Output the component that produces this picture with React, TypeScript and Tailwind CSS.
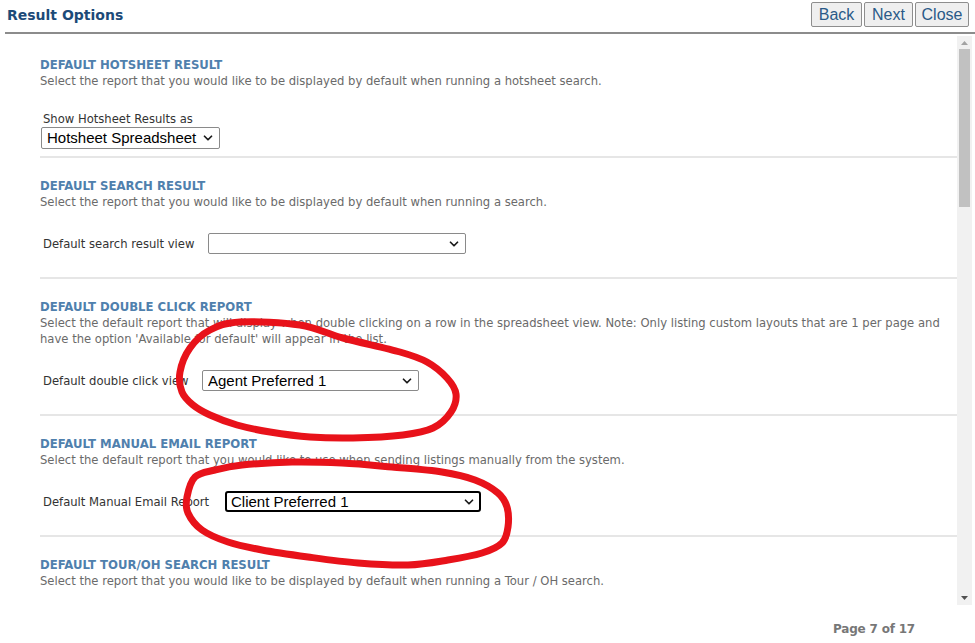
import type { ReactNode } from "react";
import { ChevronDown } from "lucide-react";

type Pt = [number, number];

// closed catmull-rom loop -> cubic bezier path
function loopPath(pts: Pt[]) {
  const n = pts.length;
  let d = `M${pts[0][0]},${pts[0][1]}`;
  for (let i = 0; i < n; i++) {
    const p0 = pts[(i - 1 + n) % n];
    const p1 = pts[i];
    const p2 = pts[(i + 1) % n];
    const p3 = pts[(i + 2) % n];
    const c1x = p1[0] + (p2[0] - p0[0]) / 6;
    const c1y = p1[1] + (p2[1] - p0[1]) / 6;
    const c2x = p2[0] - (p3[0] - p1[0]) / 6;
    const c2y = p2[1] - (p3[1] - p1[1]) / 6;
    d += ` C${c1x.toFixed(1)},${c1y.toFixed(1)} ${c2x.toFixed(1)},${c2y.toFixed(1)} ${p2[0]},${p2[1]}`;
  }
  return d;
}

const LOOP_ONE: Pt[] = [
  [240, 322], [300, 325], [343, 338], [400, 352], [427, 362], [447, 378],
  [456, 394], [451, 412], [433, 428], [403, 435], [353, 438], [310, 437],
  [270, 432], [237, 425], [210, 415], [193, 405], [182, 392], [180, 372],
  [190, 348], [210, 330],
];

const LOOP_TWO: Pt[] = [
  [242, 465], [292, 462], [342, 463], [392, 467], [442, 472], [475, 480],
  [498, 493], [507, 507], [508, 527], [502, 543], [482, 553], [448, 560],
  [408, 565], [358, 563], [308, 557], [262, 550], [228, 542], [202, 530],
  [188, 513], [187, 497], [195, 477], [215, 470],
];

function Dropdown({
  value,
  width,
  focused = false,
  tall = false,
}: {
  value: string;
  width: string;
  focused?: boolean;
  tall?: boolean;
}) {
  return (
    <span className={`relative inline-flex ${width}`}>
      <select
        defaultValue={value}
        className={`w-full appearance-none bg-white pr-[18px] font-['Liberation_Sans',Arial,sans-serif] text-[15px] leading-[18px] text-black outline-none ${
          tall ? "h-[22px]" : "h-[21px]"
        } ${
          focused
            ? "rounded-[3px] border-2 border-black pl-[4px]"
            : "rounded-[2px] border border-[#8a8a8a] pl-[5px]"
        }`}
      >
        <option value={value}>{value}</option>
      </select>
      <ChevronDown
        size={14}
        strokeWidth={3}
        className="pointer-events-none absolute right-[5px] top-1/2 -translate-y-1/2 text-[#1a1a1a]"
      />
    </span>
  );
}

function Section({
  title,
  children,
  desc,
  first = false,
}: {
  title: string;
  desc: ReactNode;
  children?: ReactNode;
  first?: boolean;
}) {
  return (
    <section className={first ? "pt-[23px]" : "pt-[20px]"}>
      <h2 className="text-[11.7px] font-bold leading-[16px] text-[#4f80ad]">{title}</h2>
      <p className="whitespace-nowrap text-[11.6px] leading-[16px] text-[#6a6a6a]">{desc}</p>
      {children}
    </section>
  );
}

function Row({ label, labelWidth, children }: { label: string; labelWidth: string; children: ReactNode }) {
  return (
    <>
      <div className="mt-[23px] flex h-[21px] items-center">
        <span className={`${labelWidth} pl-[3px] text-[11.6px] leading-[14px] text-[#333]`}>
          {label}
        </span>
        {children}
      </div>
      <div className="mt-[23px] h-[2px] bg-[#e6e6e6]" />
    </>
  );
}

export default function App() {
  return (
    <div className="relative flex h-[643px] w-[975px] flex-col overflow-hidden bg-white font-['DejaVu_Sans',Verdana,sans-serif]">
      <header className="flex h-[32px] items-start justify-between pl-[7px] pr-[6px]">
        <h1 className="mt-[7px] text-[14px] font-bold leading-[16px] text-[#1c4a78]">
          Result Options
        </h1>
        <div className="mt-[2px] flex gap-[2px] font-['Liberation_Sans',Arial,sans-serif] text-[16px] text-[#2a5a88]">
          {["Back", "Next", "Close"].map((b, i) => (
            <button
              key={b}
              className={`h-[25px] rounded-[2px] border border-[#8e8e8e] bg-[#efefef] leading-[22px] ${
                ["w-[51px]", "w-[49px]", "w-[54px]"][i]
              }`}
            >
              {b}
            </button>
          ))}
        </div>
      </header>
      <div className="ml-[5px] h-[2px] bg-[#8c8c8c]" />

      <div className="flex h-[571px]">
        <main className="min-w-0 flex-1 overflow-hidden pl-[40px]">
          <Section
            first
            title="DEFAULT HOTSHEET RESULT"
            desc="Select the report that you would like to be displayed by default when running a hotsheet search."
          >
            <div className="mt-[23px] pl-[3px] text-[11.6px] leading-[14px] text-[#333]">
              Show Hotsheet Results as
            </div>
            <div className="pl-[1px]">
              <Dropdown value="Hotsheet Spreadsheet" width="w-[179px]" tall />
            </div>
            <div className="mt-[6px] h-[2px] bg-[#e6e6e6]" />
          </Section>

          <Section
            title="DEFAULT SEARCH RESULT"
            desc="Select the report that you would like to be displayed by default when running a search."
          >
            <Row label="Default search result view" labelWidth="w-[168px]">
              <Dropdown value="" width="w-[258px]" />
            </Row>
          </Section>

          <Section
            title="DEFAULT DOUBLE CLICK REPORT"
            desc={
              <>
                Select the default report that will display when double clicking on a row in the
                spreadsheet view. Note: Only listing custom layouts that are 1 per page and
                <br />
                have the option 'Available for default' will appear in the list.
              </>
            }
          >
            <Row label="Default double click view" labelWidth="w-[162px]">
              <Dropdown value="Agent Preferred 1" width="w-[217px]" />
            </Row>
          </Section>

          <Section
            title="DEFAULT MANUAL EMAIL REPORT"
            desc="Select the default report that you would like to use when sending listings manually from the system."
          >
            <Row label="Default Manual Email Report" labelWidth="w-[185px]">
              <Dropdown value="Client Preferred 1" width="w-[256px]" focused />
            </Row>
          </Section>

          <Section
            title="DEFAULT TOUR/OH SEARCH RESULT"
            desc="Select the report that you would like to be displayed by default when running a Tour / OH search."
          />
        </main>

        <div className="mr-[3px] mt-[2px] flex h-[569px] w-[15px] flex-col items-center bg-[#f1f1f1]">
          <svg width="7" height="4" viewBox="0 0 7 4" className="mt-[5px] fill-[#a3a3a3]">
            <path d="M3.5 0 7 4H0z" />
          </svg>
          <div className="mt-[4px] h-[158px] w-[11px] bg-[#c1c1c1]" />
          <div className="flex-1" />
          <svg width="7" height="4" viewBox="0 0 7 4" className="mb-[5px] fill-[#505050]">
            <path d="M0 0h7L3.5 4z" />
          </svg>
        </div>
      </div>

      <footer className="flex flex-1 items-start justify-end pr-[60px] pt-[16px]">
        <span className="text-[12px] font-bold leading-[16px] tracking-[-0.2px] text-[#777]">
          Page 7 of 17
        </span>
      </footer>

      <svg
        width="975"
        height="643"
        viewBox="0 0 975 643"
        className="pointer-events-none absolute left-0 top-0"
      >
        <g fill="none" stroke="#e8121a" strokeWidth="7" strokeLinecap="round" strokeLinejoin="round">
          <path d={loopPath(LOOP_ONE)} />
          <path d={loopPath(LOOP_TWO)} />
        </g>
      </svg>
    </div>
  );
}
